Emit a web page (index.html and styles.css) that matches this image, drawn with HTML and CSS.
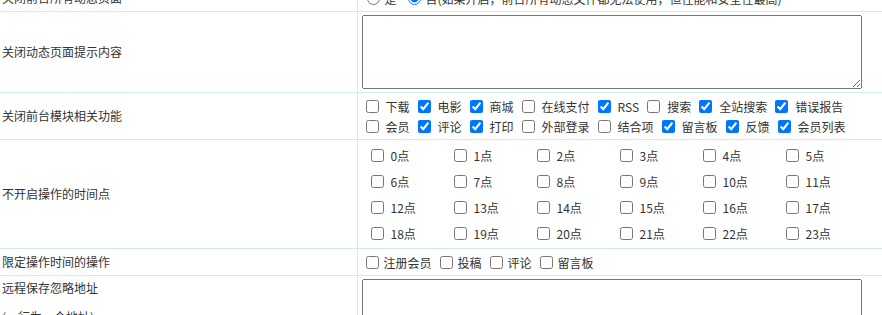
FILE: index.html
```html
<!DOCTYPE html>
<html lang="zh-CN">
<head>
<meta charset="utf-8">
<title>设置</title>
<link rel="stylesheet" href="styles.css">
</head>
<body>
<table class="form">
  <colgroup><col class="c1"><col class="c2"></colgroup>
  <tr class="r1">
    <td class="lbl">关闭前台所有动态页面</td>
    <td class="val">
      <div class="line radios">
        <label class="opt"><input type="radio" name="close"><span>是</span></label>
        <label class="opt"><input type="radio" name="close" checked><span>否(如果开启，前台所有动态文件都无法使用，但性能和安全性最高)</span></label>
      </div>
    </td>
  </tr>
  <tr class="r2">
    <td class="lbl">关闭动态页面提示内容</td>
    <td class="val"><textarea class="ta"></textarea></td>
  </tr>
  <tr class="r3">
    <td class="lbl">关闭前台模块相关功能</td>
    <td class="val">
      <div class="line mods">
        <label class="opt"><input type="checkbox"><span>下载</span></label>
        <label class="opt"><input type="checkbox" checked><span>电影</span></label>
        <label class="opt"><input type="checkbox" checked><span>商城</span></label>
        <label class="opt"><input type="checkbox"><span>在线支付</span></label>
        <label class="opt"><input type="checkbox" checked><span>RSS</span></label>
        <label class="opt"><input type="checkbox"><span>搜索</span></label>
        <label class="opt"><input type="checkbox" checked><span>全站搜索</span></label>
        <label class="opt"><input type="checkbox" checked><span>错误报告</span></label>
      </div>
      <div class="line mods">
        <label class="opt"><input type="checkbox"><span>会员</span></label>
        <label class="opt"><input type="checkbox" checked><span>评论</span></label>
        <label class="opt"><input type="checkbox" checked><span>打印</span></label>
        <label class="opt"><input type="checkbox"><span>外部登录</span></label>
        <label class="opt"><input type="checkbox"><span>结合项</span></label>
        <label class="opt"><input type="checkbox" checked><span>留言板</span></label>
        <label class="opt"><input type="checkbox" checked><span>反馈</span></label>
        <label class="opt"><input type="checkbox" checked><span>会员列表</span></label>
      </div>
    </td>
  </tr>
  <tr class="r4">
    <td class="lbl">不开启操作的时间点</td>
    <td class="val">
      <div class="hours">
        <label class="opt"><input type="checkbox"><span>0点</span></label>
        <label class="opt"><input type="checkbox"><span>1点</span></label>
        <label class="opt"><input type="checkbox"><span>2点</span></label>
        <label class="opt"><input type="checkbox"><span>3点</span></label>
        <label class="opt"><input type="checkbox"><span>4点</span></label>
        <label class="opt"><input type="checkbox"><span>5点</span></label>
        <label class="opt"><input type="checkbox"><span>6点</span></label>
        <label class="opt"><input type="checkbox"><span>7点</span></label>
        <label class="opt"><input type="checkbox"><span>8点</span></label>
        <label class="opt"><input type="checkbox"><span>9点</span></label>
        <label class="opt"><input type="checkbox"><span>10点</span></label>
        <label class="opt"><input type="checkbox"><span>11点</span></label>
        <label class="opt"><input type="checkbox"><span>12点</span></label>
        <label class="opt"><input type="checkbox"><span>13点</span></label>
        <label class="opt"><input type="checkbox"><span>14点</span></label>
        <label class="opt"><input type="checkbox"><span>15点</span></label>
        <label class="opt"><input type="checkbox"><span>16点</span></label>
        <label class="opt"><input type="checkbox"><span>17点</span></label>
        <label class="opt"><input type="checkbox"><span>18点</span></label>
        <label class="opt"><input type="checkbox"><span>19点</span></label>
        <label class="opt"><input type="checkbox"><span>20点</span></label>
        <label class="opt"><input type="checkbox"><span>21点</span></label>
        <label class="opt"><input type="checkbox"><span>22点</span></label>
        <label class="opt"><input type="checkbox"><span>23点</span></label>
      </div>
    </td>
  </tr>
  <tr class="r5">
    <td class="lbl">限定操作时间的操作</td>
    <td class="val">
      <div class="line ops">
        <label class="opt"><input type="checkbox"><span>注册会员</span></label>
        <label class="opt"><input type="checkbox"><span>投稿</span></label>
        <label class="opt"><input type="checkbox"><span>评论</span></label>
        <label class="opt"><input type="checkbox"><span>留言板</span></label>
      </div>
    </td>
  </tr>
  <tr class="r6">
    <td class="lbl top"><span class="l1">远程保存忽略地址</span><span class="l2">(一行为一个地址)</span></td>
    <td class="val"><textarea class="ta"></textarea></td>
  </tr>
</table>
</body>
</html>
```

FILE: styles.css
```css
html, body {
  margin: 0;
  padding: 0;
  background: #fff;
}
body {
  font-family: "Noto Sans CJK SC", "Microsoft YaHei", sans-serif;
  font-size: 12px;
  color: #333;
  overflow: hidden;
}
.form {
  width: 100%;
  border-collapse: collapse;
  table-layout: fixed;
  margin-top: -15px;
}
.c1 { width: 357px; }
.form td {
  border-bottom: 1px solid #d7e7f2;
  padding: 3px 0 3px 4px;
  vertical-align: middle;
}
.form td.lbl {
  padding-left: 2px;
  border-right: 1px solid #d7e7f2;
  line-height: 20px;
}
.form td.top {
  vertical-align: top;
  padding-top: 0;
}
.top .l1 {
  display: block;
  line-height: 24px;
}
.top .l2 {
  display: block;
  padding-top: 5px;
  line-height: 24px;
}
.r4 td.val {
  padding-top: 2px;
  padding-bottom: 2px;
}
.line {
  display: flex;
  align-items: center;
  height: 20px;
  white-space: nowrap;
}
.opt {
  display: flex;
  align-items: center;
}
.opt input {
  margin: 3px 3px 3px 4px;
}
.radios .opt input {
  margin: 3px 3px 3px 5px;
}
.radios .opt span {
  padding: 0 6px 0 2px;
}
.mods .opt span {
  padding: 0 4px;
}
.ops .opt span {
  padding: 0 4px 0 2px;
}
.hours {
  display: grid;
  grid-template-columns: repeat(6, 83px);
  grid-auto-rows: 26px;
}
.hours .opt {
  padding-left: 5px;
}
.hours .opt span {
  padding-left: 4px;
}
.ta {
  display: block;
  box-sizing: border-box;
  width: 500px;
  height: 74px;
  margin: 0;
  font: inherit;
}
```
